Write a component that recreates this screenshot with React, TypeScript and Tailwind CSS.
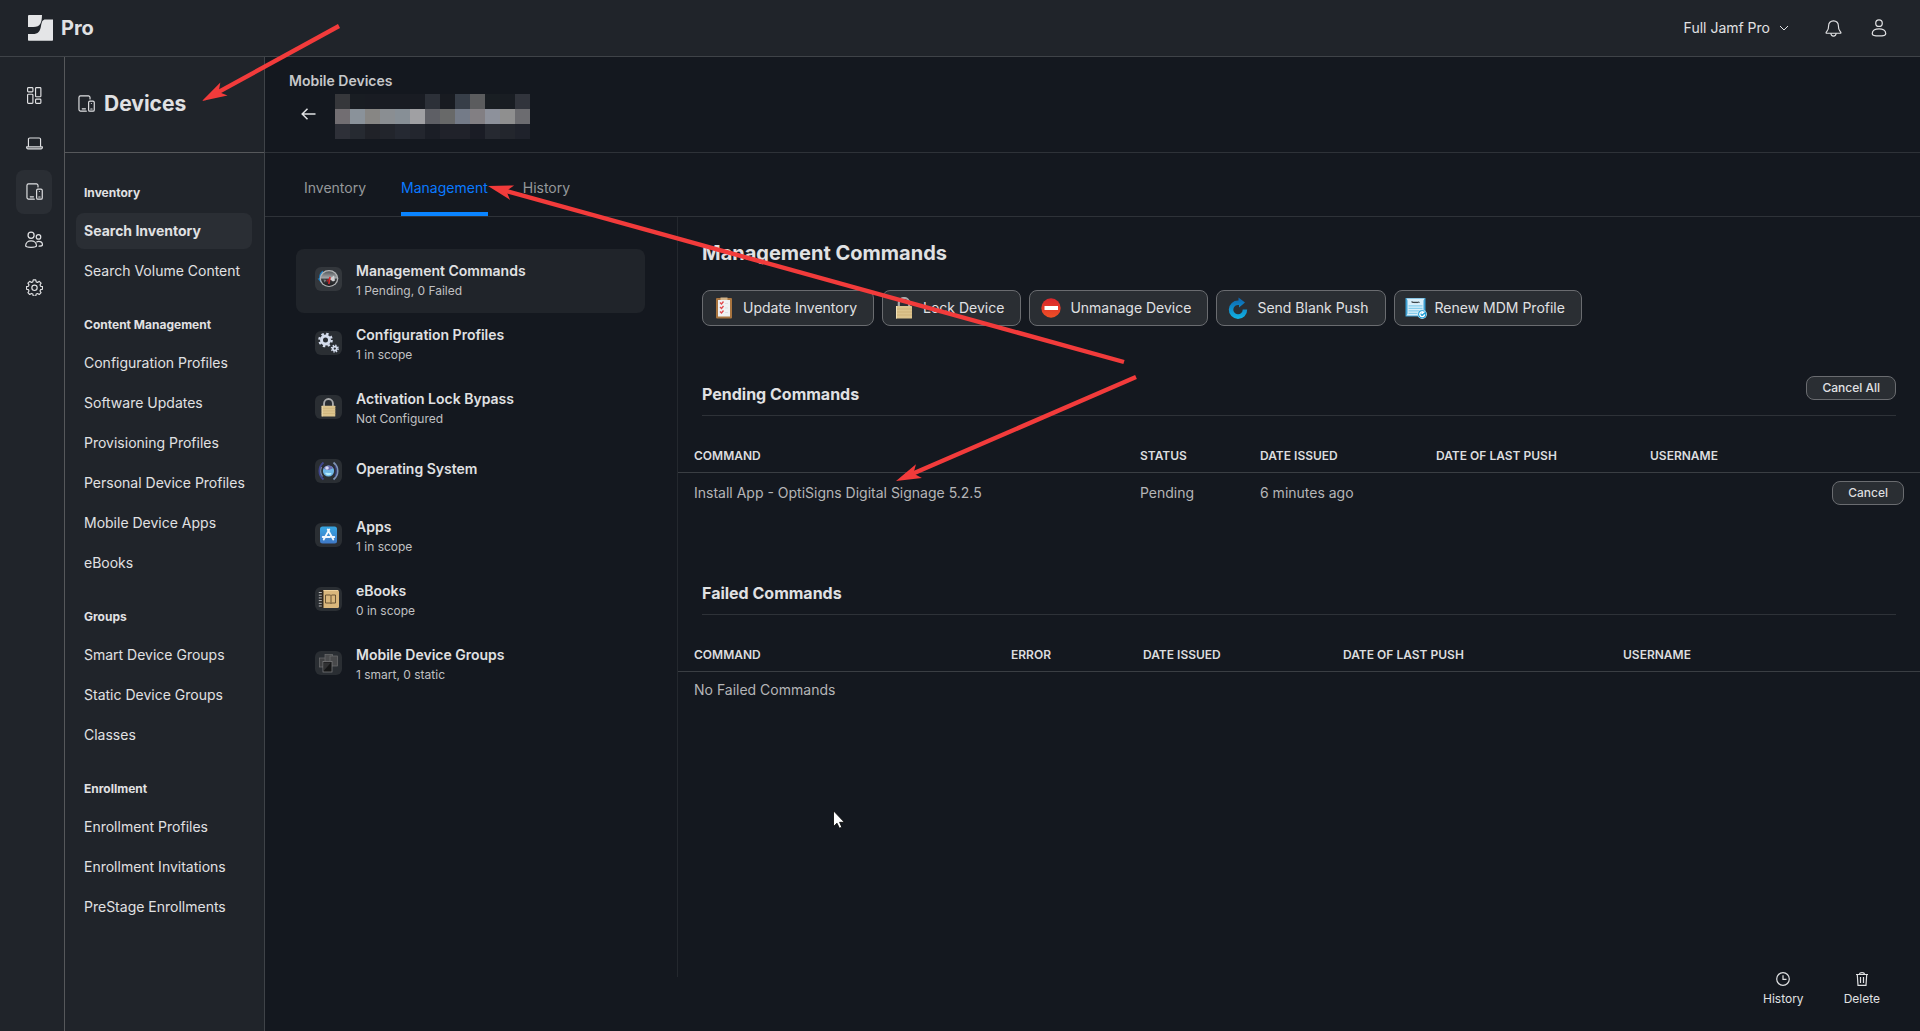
import type { ReactNode } from "react";

type NavGroup = { title: string; items: string[] };

const NAV_GROUPS: NavGroup[] = [
  { title: "Inventory", items: ["Search Inventory", "Search Volume Content"] },
  {
    title: "Content Management",
    items: [
      "Configuration Profiles",
      "Software Updates",
      "Provisioning Profiles",
      "Personal Device Profiles",
      "Mobile Device Apps",
      "eBooks",
    ],
  },
  { title: "Groups", items: ["Smart Device Groups", "Static Device Groups", "Classes"] },
  {
    title: "Enrollment",
    items: ["Enrollment Profiles", "Enrollment Invitations", "PreStage Enrollments"],
  },
];

/* ---------- line icons ---------- */

function LineIcon({ children, className = "h-4 w-4" }: { children: ReactNode; className?: string }) {
  return (
    <svg
      viewBox="0 0 16 16"
      className={className}
      fill="none"
      stroke="currentColor"
      strokeWidth="1.1"
      strokeLinecap="round"
      strokeLinejoin="round"
      aria-hidden="true"
    >
      {children}
    </svg>
  );
}

function DashboardIcon() {
  return (
    <LineIcon className="h-[17px] w-[17px]">
      <rect x="1.5" y="0.6" width="5" height="4" rx="0.8" />
      <rect x="1.5" y="6.8" width="5" height="8.6" rx="0.8" />
      <rect x="9" y="0.6" width="5" height="8.6" rx="0.8" />
      <rect x="9" y="11.4" width="5" height="4" rx="0.8" />
    </LineIcon>
  );
}

function LaptopIcon() {
  return (
    <LineIcon className="h-[17px] w-[17px]">
      <path d="M2.3 10.6V4a1.2 1.2 0 0 1 1.2-1.2h9A1.2 1.2 0 0 1 13.7 4v6.6" />
      <path d="M.6 11.1h14.8v.7a1.2 1.2 0 0 1-1.2 1.2H1.8A1.2 1.2 0 0 1 .6 11.8z" />
    </LineIcon>
  );
}

function DevicesIcon() {
  return (
    <LineIcon className="h-[17px] w-[17px]">
      <path d="M7.8 15.2H2.4A1.5 1.5 0 0 1 .9 13.7V2.3A1.5 1.5 0 0 1 2.4.8h7.4a1.5 1.5 0 0 1 1.5 1.5v1.5" />
      <path d="M4 13h3" />
      <rect x="10" y="5.8" width="5.3" height="9.4" rx="1.2" />
      <path d="M12.6 8v0M12 13.2h1.3" />
    </LineIcon>
  );
}

function UsersIcon() {
  return (
    <LineIcon className="h-[18px] w-[18px]">
      <circle cx="5.4" cy="3.8" r="2.7" />
      <path d="M.6 13.2c0-2.7 2.1-4.4 4.8-4.4s4.8 1.7 4.8 4.4c0 .8-1 1.3-4.8 1.3S.6 14 .6 13.2z" />
      <circle cx="12" cy="5.3" r="2" />
      <path d="M10.4 9.7c.5-.3 1-.4 1.7-.4 2 0 3.4 1.3 3.4 3 0 .8-.9 1.2-3 1.2" />
    </LineIcon>
  );
}

function GearIcon() {
  return (
    <LineIcon className="h-[17px] w-[17px]">
      <path d="M6.8.8h2.4l.4 1.9 1.3.5 1.6-1 1.7 1.7-1 1.6.5 1.3 1.8.4v2.4l-1.8.4-.5 1.3 1 1.6-1.7 1.7-1.6-1-1.3.5-.4 1.9H6.8l-.4-1.9-1.3-.5-1.6 1-1.7-1.7 1-1.6-.5-1.3L.5 9.6V7.2l1.8-.4.5-1.3-1-1.6 1.7-1.7 1.6 1 1.3-.5z" />
      <circle cx="8" cy="8.3" r="2.5" />
    </LineIcon>
  );
}

function BellIcon() {
  return (
    <LineIcon className="h-[17px] w-[17px]">
      <path d="M8 .8c-2.9 0-4.6 2-4.6 4.6 0 2.9-.6 4.1-1.5 5.1-.5.6-.9.9-.9 1.4 0 .4.3.6.8.6h12.4c.5 0 .8-.2.8-.6 0-.5-.4-.8-.9-1.4-.9-1-1.5-2.2-1.5-5.1C12.6 2.8 10.9.8 8 .8z" />
      <path d="M5.6 12.7a2.4 2.4 0 0 0 4.8 0" />
    </LineIcon>
  );
}

function UserIcon() {
  return (
    <LineIcon className="h-[18px] w-[18px]">
      <circle cx="8" cy="3.7" r="2.9" />
      <path d="M2 13c0-2.6 2.5-4.3 6-4.3s6 1.7 6 4.3c0 1.4-2 2-6 2s-6-.6-6-2z" />
    </LineIcon>
  );
}

function JamfLogo() {
  return (
    <svg viewBox="0 0 25 26" className="h-[26px] w-[25px]" fill="#e4e5e7" aria-hidden="true">
      <path d="M.5 0H14c-.1 7.3-1.6 12-8.6 12H0V.5z" />
      <path d="M17.5 4.4H25V25a.7.7 0 0 1-.7.7H.7A.7.7 0 0 1 0 25v-6h4.6c5.8 0 7.4-2.4 8.4-8 .8-4.6 1.5-6.6 4.5-6.6z" />
    </svg>
  );
}

/* ---------- coloured icons ---------- */

function Padlock({ className }: { className: string }) {
  return (
    <svg viewBox="0 0 20 22" className={className} aria-hidden="true">
      <path d="M4.8 10V6.2a5.2 5.2 0 0 1 10.4 0V10" fill="none" stroke="#a9aaab" strokeWidth="2.2" />
      <rect x="2" y="9" width="16" height="12.5" rx="0.6" fill="#dcc48d" />
      <path d="M2 12h16M2 15h16M2 18h16" stroke="#c9ae74" strokeWidth="0.7" />
      <path d="M2.5 9v12.5" stroke="#f1e2b8" />
    </svg>
  );
}

function DialIcon() {
  return (
    <svg viewBox="0 0 27 24" className="h-6 w-[27px]" aria-hidden="true">
      <defs>
        <linearGradient id="dial" x1="0" y1="0" x2="0" y2="1">
          <stop offset="0" stopColor="#54585b" />
          <stop offset="0.45" stopColor="#a3a6a9" />
          <stop offset="0.55" stopColor="#3a3c3f" />
          <stop offset="1" stopColor="#1b1c1e" />
        </linearGradient>
      </defs>
      <path d="M8 3.5C5 5 3.9 8 4.2 11.5H2.6l3 3.8 2.800-3.800H8z" fill="#1b7fc4" />
      <ellipse cx="14" cy="11.6" rx="9.3" ry="8.5" fill="#b4b6b8" />
      <ellipse cx="14" cy="11.6" rx="8.1" ry="7.3" fill="url(#dial)" />
      <path d="M14.5 12l4.500-3.500 1 5-2 1z" fill="#d0d2d4" />
      <path d="M8.500 12.500l3 .5-2 2.500z" fill="#77797c" />
      <path d="M15 10l-1.200 7" stroke="#d8262c" strokeWidth="1.5" />
      <path d="M13.500 12l-1.500 2.500" stroke="#b01f25" strokeWidth="1.3" />
    </svg>
  );
}

function GearsIcon() {
  return (
    <svg viewBox="0 0 27 24" className="h-6 w-[27px]" fill="none" stroke="#d5dded" aria-hidden="true">
      <circle cx="10.5" cy="9" r="4" strokeWidth="3" />
      <circle cx="10.5" cy="9" r="6.2" strokeWidth="2.2" strokeDasharray="2.43 2.43" />
      <circle cx="19.8" cy="17.6" r="2" strokeWidth="1.7" />
      <circle cx="19.8" cy="17.6" r="3.3" strokeWidth="1.5" strokeDasharray="1.3 1.3" />
    </svg>
  );
}

function GlobeIcon() {
  return (
    <svg viewBox="0 0 27 24" className="h-6 w-[27px]" fill="none" aria-hidden="true">
      <circle cx="13.5" cy="12" r="5.6" fill="#6fb6e6" />
      <path d="M8.5 9.5C10 6.5 14 5.5 17 7.5c1.5 1.5.5 3-1 2.5-2 2-4 1-7.5-.5z" fill="#6d6fb0" />
      <path d="M10 14c2-1 4 .5 6.5 0-.5 2.5-4.5 3.5-6.500 0z" fill="#b5ecfb" />
      <circle cx="12" cy="9" r="1.8" fill="#d9dcf5" />
      <path d="M8.5 3.5C3 8 3 16 8.5 20.5" stroke="#3f468f" strokeWidth="1.8" />
      <path d="M6.5 8c-1.2 3-.8 7 1 9.5" stroke="#7c8cae" strokeWidth="1.1" />
      <path d="M18.5 3.5c5.5 4.5 5.5 12.5 0 17" stroke="#7f93b4" strokeWidth="1.8" />
      <path d="M20 6.5c1.7 3 1.7 8 0 11" stroke="#3c4488" strokeWidth="1.1" />
    </svg>
  );
}

function AppStoreIcon() {
  return (
    <svg viewBox="0 0 27 24" className="h-6 w-[27px]" aria-hidden="true">
      <defs>
        <linearGradient id="store" x1="0" y1="0" x2="0" y2="1">
          <stop offset="0" stopColor="#37a6e2" />
          <stop offset="1" stopColor="#3f78c6" />
        </linearGradient>
      </defs>
      <rect x="5" y="3.5" width="17" height="17" rx="2.5" fill="url(#store)" />
      <path
        d="M12.7 6.5l5.6 10M14.3 6.5l-5.6 10M7.7 14h7.3M17 14h2.3"
        stroke="#f2f8fd"
        strokeWidth="1.8"
        strokeLinecap="round"
      />
    </svg>
  );
}

function BookIcon() {
  return (
    <svg viewBox="0 0 27 24" className="h-6 w-[27px]" aria-hidden="true">
      <rect x="5" y="3" width="19" height="18" rx="1.5" fill="#dab77c" />
      <rect x="5" y="3" width="3.5" height="18" fill="#2c2620" />
      <path d="M3.8 5.5h3M3.8 8.2h3M3.8 10.9h3M3.8 13.6h3M3.8 16.3h3M3.8 19h3" stroke="#c8c8c8" strokeWidth="0.9" />
      <path d="M8.5 3.5H23" stroke="#efd29c" />
      <path d="M10.5 8h5l.5.5.5-.5h4v8h-4l-.5.5-.5-.5h-5zM16 8.5v8" fill="none" stroke="#5e4a2c" strokeWidth="0.9" />
    </svg>
  );
}

function TabletsIcon() {
  return (
    <svg viewBox="0 0 27 24" className="h-6 w-[27px]" stroke="#6d6e70" strokeWidth="0.7" aria-hidden="true">
      <rect x="4.5" y="7" width="8.5" height="9" fill="#3f4042" />
      <rect x="10" y="3.5" width="7.5" height="8" fill="#4a4b4d" />
      <rect x="15" y="5" width="7.5" height="10" fill="#48494b" />
      <rect x="8" y="10.5" width="9" height="10.5" fill="#161718" stroke="#808183" />
      <path d="M9 11.5h7l-7 8z" fill="#303133" stroke="none" />
    </svg>
  );
}

function ClipboardIcon() {
  return (
    <svg viewBox="0 0 20 22" className="h-[22px] w-5" aria-hidden="true">
      <rect x="2" y="1" width="16" height="20.5" rx="1" fill="#a8743f" />
      <rect x="4" y="3" width="12" height="16.5" fill="#f0f1f2" />
      <rect x="6.5" y="0.5" width="7" height="2.5" fill="#d3b48a" />
      <path
        d="M6 5.5l1.5 1.500 2-2.500M6 10l1.500 1.500 2-2.500M6 14.500l1.500 1.500 2-2.500"
        fill="none"
        stroke="#e0474a"
        strokeWidth="1.3"
      />
      <path d="M11 6.5h3M11 11h3M11 15.5h3" stroke="#d5d9dc" strokeWidth="0.7" />
    </svg>
  );
}

function NoEntryIcon() {
  return (
    <svg viewBox="0 0 20 20" className="h-5 w-5" aria-hidden="true">
      <defs>
        <linearGradient id="stop" x1="0" y1="0" x2="0" y2="1">
          <stop offset="0" stopColor="#d9252b" />
          <stop offset="1" stopColor="#ee5126" />
        </linearGradient>
      </defs>
      <circle cx="10" cy="10" r="9.7" fill="url(#stop)" />
      <rect x="3.5" y="8" width="13.5" height="4" fill="#fff" />
    </svg>
  );
}

function PushIcon() {
  return (
    <svg viewBox="0 0 20 22" className="h-[22px] w-5" aria-hidden="true">
      <defs>
        <linearGradient id="push" x1="0" y1="0" x2="0" y2="1">
          <stop offset="0" stopColor="#0c62ad" />
          <stop offset="1" stopColor="#12b3e4" />
        </linearGradient>
      </defs>
      <path d="M10.5.5L17 5.5l-6 5V8A4.7 4.7 0 1 0 14.7 12.5h4.5A9.2 9.2 0 1 1 10.5 3.5z" fill="url(#push)" />
    </svg>
  );
}

function ProfileIcon() {
  return (
    <svg viewBox="0 0 22 22" className="h-[22px] w-[22px] shrink-0" aria-hidden="true">
      <path d="M.5 1h20v18.5H.5z" fill="#3c9fd2" />
      <path d="M1.5 1.5h18l-1 2v13l1 2h-18l1-2v-13z" fill="#d9effa" />
      <path d="M6.5 5.3c1-1.5 1 1 2 0s1 1 2 0 1 1 2 0 1 .5 2 0" fill="none" stroke="#30383d" strokeWidth="1.1" />
      <path d="M3.5 8.8h14M3.5 11.3h14M3.5 13.8h12M3.5 16.3h9" stroke="#86cdec" strokeWidth="1.2" />
      <circle cx="17.2" cy="17.2" r="4.7" fill="#b9e4f6" />
      <circle cx="17.2" cy="17.2" r="4" fill="#1a9bd4" />
      <path d="M19.6 17.4a2.4 2.4 0 1 1-1.700-2.500M16.500 17l3-2.500" fill="none" stroke="#fff" strokeWidth="1.4" />
    </svg>
  );
}

/* ---------- data ---------- */

const RAIL = [
  { label: "Dashboard", icon: <DashboardIcon /> },
  { label: "Computers", icon: <LaptopIcon /> },
  { label: "Devices", icon: <DevicesIcon />, active: true },
  { label: "Users", icon: <UsersIcon /> },
  { label: "Settings", icon: <GearIcon /> },
];

const SECTIONS = [
  { title: "Management Commands", note: "1 Pending, 0 Failed", icon: <DialIcon />, active: true },
  { title: "Configuration Profiles", note: "1 in scope", icon: <GearsIcon /> },
  { title: "Activation Lock Bypass", note: "Not Configured", icon: <Padlock className="h-[19px] w-[17px]" /> },
  { title: "Operating System", note: "", icon: <GlobeIcon /> },
  { title: "Apps", note: "1 in scope", icon: <AppStoreIcon /> },
  { title: "eBooks", note: "0 in scope", icon: <BookIcon /> },
  { title: "Mobile Device Groups", note: "1 smart, 0 static", icon: <TabletsIcon /> },
];

const COMMANDS = [
  { label: "Update Inventory", icon: <ClipboardIcon /> },
  { label: "Lock Device", icon: <Padlock className="h-[22px] w-5" /> },
  { label: "Unmanage Device", icon: <NoEntryIcon /> },
  { label: "Send Blank Push", icon: <PushIcon /> },
  { label: "Renew MDM Profile", icon: <ProfileIcon /> },
];

// device name, masked out
const MOSAIC = [
  "#36373b", "#191d23", "#191c23", "#191c23", "#191c23", "#191c23", "#2c3038", "#181b21", "#373e48", "#5b5c5e", "#191e23", "#191d23", "#31343c",
  "#726e72", "#8a929a", "#878684", "#8a8e92", "#878f96", "#a0a0a3", "#5e5f65", "#686969", "#747b88", "#827f83", "#8d919b", "#8f8f8f", "#6c6c70",
  "#2e3038", "#262a31", "#202228", "#22252c", "#252932", "#23262e", "#1b1e26", "#20222a", "#20222a", "#1a1c25", "#262931", "#23262d", "#1f222b",
];

/* ---------- layout parts ---------- */

function TopBar() {
  return (
    <header className="flex h-[57px] shrink-0 items-center justify-between border-b border-[#3f4348] bg-[#20242a] pr-8 pl-7">
      <a href="#" className="flex items-center gap-2 text-xl font-bold">
        <JamfLogo />
        Pro
      </a>
      <div className="flex items-center">
        <button type="button" className="flex items-center gap-2 text-sm">
          Full Jamf Pro
          <svg viewBox="0 0 12 12" className="h-3 w-3" fill="none" stroke="currentColor" aria-hidden="true">
            <path d="M2 4l4 4 4-4" />
          </svg>
        </button>
        <button type="button" aria-label="Notifications" className="ml-[35px]">
          <BellIcon />
        </button>
        <button type="button" aria-label="Account" className="ml-7">
          <UserIcon />
        </button>
      </div>
    </header>
  );
}

function Rail() {
  return (
    <nav aria-label="Main" className="flex w-[65px] shrink-0 flex-col gap-1 border-r border-[#56585b] bg-[#20242a] pt-[17px] pl-4">
      {RAIL.map((item) => (
        <a
          key={item.label}
          href="#"
          aria-label={item.label}
          className={`flex h-11 w-9 items-center justify-center rounded-lg pb-px ${item.active ? "bg-[#2a2e34]" : ""}`}
        >
          {item.icon}
        </a>
      ))}
    </nav>
  );
}

function Sidebar() {
  return (
    <aside className="flex w-[200px] shrink-0 flex-col border-r border-[#3f4348] bg-[#20242a]">
      <div className="flex h-24 items-center gap-[9px] border-b border-[#56585b] pb-[2px] pl-[13px]">
        <DevicesIcon />
        <h1 className="text-[21px] font-bold">Devices</h1>
      </div>
      <div className="flex flex-col gap-[26px] pt-[30px] pr-3 pl-[11px]">
        {NAV_GROUPS.map((group) => (
          <nav key={group.title} aria-label={group.title}>
            <h2 className="mb-[10px] pl-2 text-xs leading-5 font-bold">{group.title}</h2>
            <ul className="flex flex-col gap-1">
              {group.items.map((item) => (
                <li key={item}>
                  <a
                    href="#"
                    className={`flex h-9 items-center rounded-lg pl-2 text-sm whitespace-nowrap ${
                      item === "Search Inventory" ? "bg-[#2a2e34] font-bold" : ""
                    }`}
                  >
                    {item}
                  </a>
                </li>
              ))}
            </ul>
          </nav>
        ))}
      </div>
    </aside>
  );
}

function PageHeader() {
  return (
    <div className="h-24 shrink-0 border-b border-[#2e3238] pt-3 pl-6">
      <p className="mb-px text-sm leading-6 font-semibold text-[#c6c7c9]">Mobile Devices</p>
      <div className="flex items-start pl-3">
        <a href="#" aria-label="Back" className="mt-[14px] mr-[19px]">
          <svg viewBox="0 0 15 12" className="h-3 w-[15px]" fill="none" stroke="currentColor" strokeWidth="1.5" aria-hidden="true">
            <path d="M14.5 6H1.5M6.5.7L1.2 6l5.3 5.3" />
          </svg>
        </a>
        <div className="grid grid-cols-[repeat(13,15px)]">
          {MOSAIC.map((color, i) => (
            <span key={i} className="h-[15px]" style={{ backgroundColor: color }} />
          ))}
        </div>
      </div>
    </div>
  );
}

function Tabs() {
  return (
    <div role="tablist" className="flex h-16 shrink-0 gap-[35px] border-b border-[#2e3238] pl-[39px] text-sm text-[#96989b]">
      <button type="button" role="tab" aria-selected="false" className="border-b-4 border-transparent pt-[11px]">
        Inventory
      </button>
      <button type="button" role="tab" aria-selected="true" className="border-b-4 border-[#0a84ff] pt-[11px] text-[#0a7aff]">
        Management
      </button>
      <button type="button" role="tab" aria-selected="false" className="border-b-4 border-transparent pt-[11px]">
        History
      </button>
    </div>
  );
}

function SectionList() {
  return (
    <nav aria-label="Management sections" className="mb-[54px] w-[413px] shrink-0 border-r border-[#24282e] pt-8 pr-8 pl-[31px]">
      {SECTIONS.map((section) => (
        <a
          key={section.title}
          href="#"
          className={`flex h-16 gap-[14px] rounded-lg pl-[19px] ${section.active ? "bg-[#20242a]" : ""}`}
        >
          <span
            className={`mt-[18px] flex h-6 w-[27px] items-center justify-center rounded-md ${
              section.active ? "bg-[#33373c]" : "bg-[#2a2e33]"
            }`}
          >
            {section.icon}
          </span>
          <span className={`flex flex-col ${section.note ? "pt-3" : "pt-[18px]"}`}>
            <span className="text-sm font-semibold">{section.title}</span>
            {section.note && <span className="text-xs leading-5 text-[#c0c1c3]">{section.note}</span>}
          </span>
        </a>
      ))}
    </nav>
  );
}

function SmallButton({ children }: { children: ReactNode }) {
  return (
    <button type="button" className="h-6 rounded-lg border border-[#6a6c70] bg-[#2a2e33] px-[15px] text-xs font-medium">
      {children}
    </button>
  );
}

function SectionTitle({ title, children }: { title: string; children?: ReactNode }) {
  return (
    <div className="mx-6 flex h-10 items-start justify-between border-b border-[#2e3238]">
      <h3 className="pt-[6px] text-base leading-6 font-bold">{title}</h3>
      {children}
    </div>
  );
}

function PendingTable() {
  const th = "pl-4 font-semibold";
  return (
    <table className="mt-6 w-full table-fixed text-left text-sm text-[#b4b5b7]">
      <thead>
        <tr className="h-8 border-b border-[#3a3e43] text-xs text-[#dcdddf]">
          <th className={th}>COMMAND</th>
          <th className={`w-[120px] ${th}`}>STATUS</th>
          <th className={`w-[176px] ${th}`}>DATE ISSUED</th>
          <th className={`w-[214px] ${th}`}>DATE OF LAST PUSH</th>
          <th className={`w-[150px] ${th}`}>USERNAME</th>
          <th className="w-[136px]" aria-label="Actions" />
        </tr>
      </thead>
      <tbody>
        <tr className="h-[42px]">
          <td className="pl-4">Install App - OptiSigns Digital Signage 5.2.5</td>
          <td className="pl-4">Pending</td>
          <td className="pl-4">6 minutes ago</td>
          <td />
          <td />
          <td className="pr-4 text-right text-[#dcdddf]">
            <SmallButton>Cancel</SmallButton>
          </td>
        </tr>
      </tbody>
    </table>
  );
}

function FailedTable() {
  const th = "pl-4 font-semibold";
  return (
    <table className="mt-6 w-full table-fixed text-left text-sm text-[#b4b5b7]">
      <thead>
        <tr className="h-8 border-b border-[#3a3e43] text-xs text-[#dcdddf]">
          <th className={th}>COMMAND</th>
          <th className={`w-[132px] ${th}`}>ERROR</th>
          <th className={`w-[200px] ${th}`}>DATE ISSUED</th>
          <th className={`w-[280px] ${th}`}>DATE OF LAST PUSH</th>
          <th className={`w-[313px] ${th}`}>USERNAME</th>
        </tr>
      </thead>
      <tbody>
        <tr className="h-[38px]">
          <td className="pl-4" colSpan={5}>
            No Failed Commands
          </td>
        </tr>
      </tbody>
    </table>
  );
}

function CommandsPanel() {
  return (
    <section className="flex min-w-0 flex-1 flex-col">
      <h2 className="px-6 pt-5 text-xl leading-8 font-bold">Management Commands</h2>
      <div className="mt-[21px] flex flex-wrap gap-2 px-6">
        {COMMANDS.map((command) => (
          <button
            key={command.label}
            type="button"
            className="flex h-9 items-center rounded-lg border border-[#6a6c70] bg-[#2a2e33] pr-4 pl-[11px] text-sm"
          >
            <span className="mr-[9px] flex w-5 justify-center">{command.icon}</span>
            {command.label}
          </button>
        ))}
      </div>
      <div className="mt-[50px]">
        <SectionTitle title="Pending Commands">
          <SmallButton>Cancel All</SmallButton>
        </SectionTitle>
        <PendingTable />
      </div>
      <div className="mt-[61px]">
        <SectionTitle title="Failed Commands" />
        <FailedTable />
      </div>
      <div className="mt-auto flex justify-end gap-10 pr-10 pb-6 text-xs">
        <button type="button" className="flex flex-col items-center gap-[5px]">
          <svg viewBox="0 0 14 14" className="h-[14px] w-[14px]" fill="none" stroke="currentColor" strokeWidth="1.2" aria-hidden="true">
            <circle cx="7" cy="7" r="6.3" />
            <path d="M7 3.2V7.3h3.5" />
          </svg>
          History
        </button>
        <button type="button" className="flex flex-col items-center gap-[5px]">
          <svg viewBox="0 0 14 14" className="h-[14px] w-[14px]" fill="none" stroke="currentColor" strokeWidth="1.2" aria-hidden="true">
            <path d="M1 2.5h12M4.6 2.3C4.6 1.2 5.3.7 7 .7s2.4.5 2.4 1.6M2.3 2.7l.7 10.6h8l.7-10.6M5.5 5v6M8.5 5v6" />
          </svg>
          Delete
        </button>
      </div>
    </section>
  );
}

/* Red pointers drawn over the page; each one points along +x from its tail to its tip. */
function Arrow({ from, to }: { from: [number, number]; to: [number, number] }) {
  const dx = to[0] - from[0];
  const dy = to[1] - from[1];
  const length = Math.hypot(dx, dy);
  const angle = (Math.atan2(dy, dx) * 180) / Math.PI;
  return (
    <g transform={`translate(${to[0]} ${to[1]}) rotate(${angle})`} fill="#f23b3b">
      <path d={`M${-length} -2.2H-18V2.2H${-length}z`} />
      <path d="M0 0L-25 -7.5L-19 0L-25 7.5z" />
    </g>
  );
}

function Annotations() {
  return (
    <>
      <svg
        className="pointer-events-none absolute top-0 left-0 h-[520px] w-[1200px]"
        viewBox="0 0 1200 520"
        aria-hidden="true"
      >
        <Arrow from={[339, 26]} to={[202, 101]} />
        <Arrow from={[1124, 362]} to={[488, 186]} />
        <Arrow from={[1136, 377]} to={[896, 481]} />
      </svg>
      <svg className="pointer-events-none absolute top-[810px] left-[833px] h-[19px] w-3" viewBox="0 0 12 19" aria-hidden="true">
        <path d="M.5.8v15.7l3.5-3.3 2.4 5 2.4-1-2.2-4.9h4.8z" fill="#fff" stroke="#000" strokeWidth="0.8" />
      </svg>
    </>
  );
}

export default function App() {
  return (
    <div className="relative flex min-h-screen flex-col bg-[#14181f] font-['Inter',sans-serif] text-[#e0e1e3]">
      <TopBar />
      <div className="flex flex-1">
        <Rail />
        <Sidebar />
        <main className="flex min-w-0 flex-1 flex-col">
          <PageHeader />
          <Tabs />
          <div className="flex flex-1">
            <SectionList />
            <CommandsPanel />
          </div>
        </main>
      </div>
      <Annotations />
    </div>
  );
}
